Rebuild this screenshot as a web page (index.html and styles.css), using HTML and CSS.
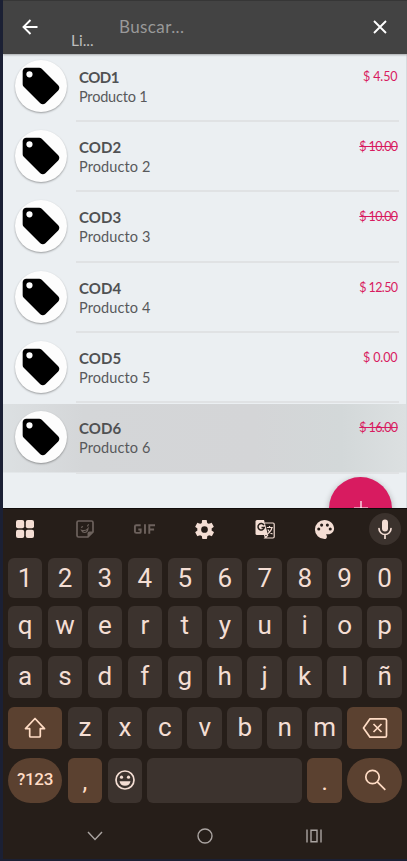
FILE: index.html
```html
<!DOCTYPE html>
<html lang="es">
<head>
<meta charset="utf-8">
<title>Productos</title>
<link rel="stylesheet" href="styles.css">
</head>
<body>
<svg class="defs" width="0" height="0"><symbol id="tag" viewBox="0 0 24 24"><path fill-rule="evenodd" d="M21.4 11.6l-9-9C12 2.2 11.6 2 11 2H4C2.900 2 2 2.900 2 4v7c0 .6.2 1.100.6 1.400l9 9c.8.8 2 .8 2.800 0l7-7c.8-.8.8-2 0-2.800zM5.700 7.300A1.700 1.700 0 1 1 5.700 3.900a1.700 1.700 0 0 1 0 3.400z"/></symbol></svg>
<div class="phone">
  <header class="bar">
    <svg class="back" viewBox="0 0 16 16"><path d="M15.500 8H2M8.500 1L1.500 8l7 7"/></svg>
    <span class="title">Li...</span>
    <span class="search">Buscar...</span>
    <svg class="close" viewBox="0 0 14 14"><path d="M1 1l12 12M13 1L1 13"/></svg>
  </header>
  <main class="list">
    <div class="row"><div class="avatar"><svg><use href="#tag"/></svg></div><div class="info"><div class="text narrow"><b>COD1</b><span>Producto 1</span></div><span class="price">$ 4.50</span></div></div>
    <div class="row"><div class="avatar"><svg><use href="#tag"/></svg></div><div class="info"><div class="text"><b>COD2</b><span>Producto 2</span></div><span class="price long off">$ 10.00</span></div></div>
    <div class="row"><div class="avatar"><svg><use href="#tag"/></svg></div><div class="info"><div class="text"><b>COD3</b><span>Producto 3</span></div><span class="price long off">$ 10.00</span></div></div>
    <div class="row"><div class="avatar"><svg><use href="#tag"/></svg></div><div class="info"><div class="text"><b>COD4</b><span>Producto 4</span></div><span class="price long">$ 12.50</span></div></div>
    <div class="row"><div class="avatar"><svg><use href="#tag"/></svg></div><div class="info"><div class="text"><b>COD5</b><span>Producto 5</span></div><span class="price">$ 0.00</span></div></div>
    <div class="row pressed"><div class="avatar"><svg><use href="#tag"/></svg></div><div class="info"><div class="text"><b>COD6</b><span>Producto 6</span></div><span class="price long off">$ 16.00</span></div></div>
    <div class="fab"><svg viewBox="0 0 14 14"><path d="M7 0v14M0 7h14"/></svg></div>
  </main>
  <section class="keyboard">
    <div class="tools">
      <div><svg viewBox="0 0 20 20"><rect x="1" y="1" width="8.200" height="8.200" rx="2"/><rect x="10.800" y="1" width="8.200" height="8.200" rx="2"/><rect x="1" y="10.800" width="8.200" height="8.200" rx="2"/><rect x="10.800" y="10.800" width="8.200" height="8.200" rx="2"/></svg></div>
      <div class="dim"><svg viewBox="0 0 20 20"><path class="line" d="M3.500 2h13Q18 2 18 3.500V13l-5 5H3.500Q2 18 2 16.500v-13Q2 2 3.500 2z"/><path d="M12.500 18.500v-4q0-2 2-2h4z"/><path class="thin" d="M6 8.500l2-1M12.500 7.500q0-1.500 1.500-2M6.500 11.200q4 1.500 6.500-1.700-.5 4-3.500 4-2 0-3-2.300z"/></svg></div>
      <div class="dim"><svg class="gif" viewBox="0 0 24 12"><path d="M8 2H3.500Q2 2 2 3.500v5Q2 10 3.500 10H7q1 0 1-1V6.500H5.500M12.500 1v10M17 11V2h6M17 6.500h5"/></svg></div>
      <div><svg class="gear" viewBox="0 0 24 24"><path fill-rule="evenodd" d="M19.400 13c.1-.3.100-.6.100-1s0-.7-.1-1l2.100-1.600c.2-.2.3-.4.1-.6l-2-3.500c-.1-.2-.4-.3-.6-.2l-2.500 1c-.5-.4-1.100-.7-1.700-1l-.4-2.600c0-.3-.2-.5-.5-.5h-4c-.3 0-.5.2-.5.500L9.200 5.100c-.6.300-1.200.6-1.700 1L5 5.100c-.2-.1-.5 0-.6.2l-2 3.500c-.1.200-.1.400.1.600L4.600 11c-.1.300-.1.700-.1 1s0 .7.100 1l-2.100 1.600c-.2.200-.2.400-.1.600l2 3.500c.1.200.4.300.6.200l2.500-1c.5.400 1.100.7 1.700 1l.4 2.600c0 .3.200.5.500.5h4c.3 0 .5-.2.5-.5l.4-2.600c.6-.3 1.200-.6 1.700-1l2.500 1c.2.100.5 0 .6-.2l2-3.500c.1-.2.1-.4-.1-.6L19.400 13zM12 15.500a3.500 3.500 0 1 1 0-7 3.500 3.500 0 0 1 0 7z"/></svg></div>
      <div><svg viewBox="0 0 20 20"><path d="M2 1h7l4 15H2Q.5 16 .5 14.500v-12Q.5 1 2 1z"/><path class="cut" d="M9 6.200A3.200 3.200 0 1 0 9.300 8.600H6.500"/><path class="thin" d="M10 4h8q1.200 0 1.200 1.200v12.600Q19.200 19 18 19h-8l3-3M11.800 8.500h6M14.500 7v1.500M17 8.500q-.8 4-4.500 6.500M12.800 10.500q1.500 3 4.700 4.500M9.500 16l1 3"/></svg></div>
      <div><svg class="palette" viewBox="0 0 24 24"><path fill-rule="evenodd" d="M12 2a10 10 0 0 0 0 20c1.500 0 2.500-1.100 2.500-2.500 0-.7-.2-1.200-.6-1.700-.1-.1-.2-.2-.2-.3 0-.3.200-.5.500-.5H16c3.300 0 6-2.700 6-6C22 6.040 17.500 2 12 2zM6 13a1.600 1.600 0 1 1 0-3.200A1.600 1.600 0 0 1 6 13zM9 9a1.600 1.600 0 1 1 0-3.200A1.600 1.600 0 0 1 9 9zM15 9a1.600 1.600 0 1 1 0-3.200A1.600 1.600 0 0 1 15 9zM18 13a1.600 1.600 0 1 1 0-3.200A1.600 1.600 0 0 1 18 13z"/></svg></div>
      <div class="mic"><svg viewBox="0 0 20 20"><rect x="7" y=".5" width="6" height="12" rx="3"/><path class="line" d="M4 9.500a6 6 0 0 0 12 0M10 15.500v4"/></svg></div>
    </div>
    <div class="keys r1"><kbd>1</kbd><kbd>2</kbd><kbd>3</kbd><kbd>4</kbd><kbd>5</kbd><kbd>6</kbd><kbd>7</kbd><kbd>8</kbd><kbd>9</kbd><kbd>0</kbd></div>
    <div class="keys r2"><kbd>q</kbd><kbd>w</kbd><kbd>e</kbd><kbd>r</kbd><kbd>t</kbd><kbd>y</kbd><kbd>u</kbd><kbd>i</kbd><kbd>o</kbd><kbd>p</kbd></div>
    <div class="keys r3"><kbd>a</kbd><kbd>s</kbd><kbd>d</kbd><kbd>f</kbd><kbd>g</kbd><kbd>h</kbd><kbd>j</kbd><kbd>k</kbd><kbd>l</kbd><kbd>ñ</kbd></div>
    <div class="keys r4"><kbd class="wide brown"><svg viewBox="0 0 24 24"><path d="M12 2.500L2.500 12.700h4.200V20q0 1 1 1h8.600q1 0 1-1v-7.300h4.200z"/></svg></kbd><kbd>z</kbd><kbd>x</kbd><kbd>c</kbd><kbd>v</kbd><kbd>b</kbd><kbd>n</kbd><kbd>m</kbd><kbd class="wide brown"><svg class="del" viewBox="0 0 26 22"><path d="M8 1.800h15q1.500 0 1.500 1.500v15.400q0 1.500-1.500 1.500H8L1.500 11zM11.500 7l8 8M19.500 7l-8 8"/></svg></kbd></div>
    <div class="keys r5"><kbd class="wide brown round num">?123</kbd><kbd class="brown punct">,</kbd><kbd><svg class="smile" viewBox="0 0 22 22"><circle cx="11" cy="11" r="9"/><path class="solid" d="M5.500 12.300h11a5.600 5.600 0 0 1-11 0z"/><circle class="solid" cx="7.500" cy="8.200" r="1.600"/><circle class="solid" cx="14.500" cy="8.200" r="1.600"/></svg></kbd><kbd class="space"></kbd><kbd class="brown punct">.</kbd><kbd class="wide brown round"><svg class="find" viewBox="0 0 22 22"><circle cx="8.500" cy="8" r="6.700"/><path d="M13.300 12.800l8 8"/></svg></kbd></div>
    <nav class="nav">
      <svg viewBox="0 0 20 20"><path d="M3 6l7 7.500L17 6"/></svg>
      <svg viewBox="0 0 20 20"><circle cx="10" cy="10" r="7"/></svg>
      <svg viewBox="0 0 20 20"><path d="M3 3.500v13M17 3.500v13M7 4.200h6v11.600H7z"/></svg>
    </nav>
  </section>
</div>
</body>
</html>
```
FILE: styles.css
```css
* { box-sizing: border-box; }
body { margin: 0; background: #1b2034; font-family: Lato, "Liberation Sans", sans-serif; }
.defs { display: none; }
.phone { width: 404px; height: 859px; margin-left: 3px; display: flex; flex-direction: column; overflow: hidden; }
svg { flex: none; }
.bar { height: 53.500px; flex: none; display: flex; align-items: center; background: #434343; border-top: 1px solid #363636; padding: 0 20px 0 19px; z-index: 2; box-shadow: 0 1px 2px rgba(0,0,0,.3); }
.bar svg { fill: none; stroke: #fff; stroke-width: 1.900; }
.back { width: 16px; height: 16px; }
.title { width: 26px; margin: 26px 22px 0 33px; color: #bdbdbd; font-size: 15.500px; line-height: 20px; }
.search { flex: 1; color: #999; font-size: 17px; line-height: 22px; letter-spacing: .4px; }
.close { width: 14px; height: 14px; }

.list { position: relative; height: 454.500px; flex: none; overflow: hidden; background: #ebeff2; border-right: 1px solid #d6dadd; }
.row { height: 70.350px; display: flex; align-items: center; padding: 0 7px 0 12px; }
.row:first-child { margin-top: -3px; }
.pressed { background: linear-gradient(90deg, #dce0e2 0, #d4d6d8 20%, #d4d5d7 62%, #d3d8d9 84%, #dce0e1 100%) 0 1.500px / 100% 68.500px no-repeat; }
.avatar { width: 52px; height: 52px; flex: none; border-radius: 50%; background: #fdfdfd; display: flex; align-items: center; justify-content: center; box-shadow: 0 1px 2px rgba(0,0,0,.35); }
.avatar svg { width: 44px; height: 44px; }
.info { height: calc(100% + 2px); flex: 1; margin-left: 8.500px; padding: 17.200px 1.500px 0 3.500px; display: flex; justify-content: space-between; border-bottom: 2px solid #e0e2e4; }
.text { display: flex; flex-direction: column; color: #505153; white-space: nowrap; }
.text b { font-size: 15px; line-height: 20px; letter-spacing: .1px; font-weight: 700; }
.text span { font-size: 14.500px; line-height: 20px; letter-spacing: .1px; color: #58595b; }
.narrow b { letter-spacing: -.5px; }
.narrow span { letter-spacing: -.2px; }
.price { color: #d81b60; font-size: 12.500px; line-height: 20px; letter-spacing: -.1px; white-space: nowrap; }
.long { letter-spacing: -.6px; }
.off { text-decoration: line-through; }
.fab { position: absolute; left: 326px; top: 423.500px; width: 63px; height: 63px; border-radius: 50%; background: #d81b60; display: flex; align-items: center; justify-content: center; box-shadow: 0 2px 6px rgba(0,0,0,.3); }
.fab svg { width: 14px; height: 14px; margin-top: -2px; stroke: #fff; stroke-width: 1.200; }

.keyboard { flex: 1; background: #261e19; border-top: 1px solid #100c0b; padding: 0 5px 0 4.700px; font-family: Roboto, "Liberation Sans", sans-serif; color: #f4ded4; }
.tools { height: 49px; display: grid; grid-template-columns: repeat(7, 60px); margin: 0 -17px 0 -13px; align-items: center; justify-items: center; }
.tools div { display: flex; align-items: center; justify-content: center; margin-top: -9px; }
.tools svg { width: 20px; height: 20px; fill: #f4ded4; }
.tools .gif { width: 23px; height: 12px; fill: none; stroke: #6d625d; stroke-width: 2; }
.tools .gear { width: 23px; height: 23px; }
.tools .palette { width: 23px; height: 23px; }
.tools .dim svg:not(.gif) { fill: #6d625d; stroke: #6d625d; stroke-width: 0; }
.tools .line { fill: none; stroke: #f4ded4; stroke-width: 1.700; stroke-linecap: round; }
.tools .thin { fill: none; stroke: #f4ded4; stroke-width: 1.200; }
.tools .dim .line, .tools .dim .thin { stroke: #6d625d; }
.tools .cut { fill: none; stroke: #261e19; stroke-width: 1.500; }
.tools .mic { width: 32px; height: 32px; border-radius: 50%; background: #3b322d; }
.keys { display: flex; gap: 5.300px; }
kbd { flex: 0 0 34.660px; border-radius: 6px; background: #3c332e; display: flex; align-items: center; justify-content: center; font: 400 26px/1 Roboto, "Liberation Sans", sans-serif; }
.r1 { height: 40px; margin-bottom: 7.500px; }
.r2 { height: 42px; margin-bottom: 8.800px; }
.r3 { height: 42px; margin-bottom: 8.800px; }
.r4 { height: 42px; margin-bottom: 8.700px; }
.r5 { height: 45px; }
.r2 kbd, .r3 kbd, .r4 kbd:not(.wide) { padding-bottom: 3px; }
.wide { flex-basis: 54.600px; }
.space { flex: 1; }
.brown { background: #5b4130; color: #ffdcc5; }
.round { border-radius: 22.500px; }
.num { font-size: 17px; font-weight: 500; letter-spacing: -.3px; padding-bottom: 1px; }
.punct { padding-top: 4px; font-size: 24px; }
kbd svg { width: 24px; height: 24px; fill: none; stroke: #ffdcc5; stroke-width: 1.700; stroke-linejoin: round; }
kbd .del { width: 26px; height: 22px; }
kbd .smile { width: 22px; height: 22px; stroke: #f4ded4; }
kbd .solid { fill: #f4ded4; stroke: none; }
kbd .find { width: 22px; height: 22px; }
.nav { height: 66px; display: flex; justify-content: space-between; padding: 0 77.500px 0 77.300px; align-items: center; }
.nav svg { width: 20px; height: 20px; fill: none; stroke: #aaa4a1; stroke-width: 1.400; }
```
